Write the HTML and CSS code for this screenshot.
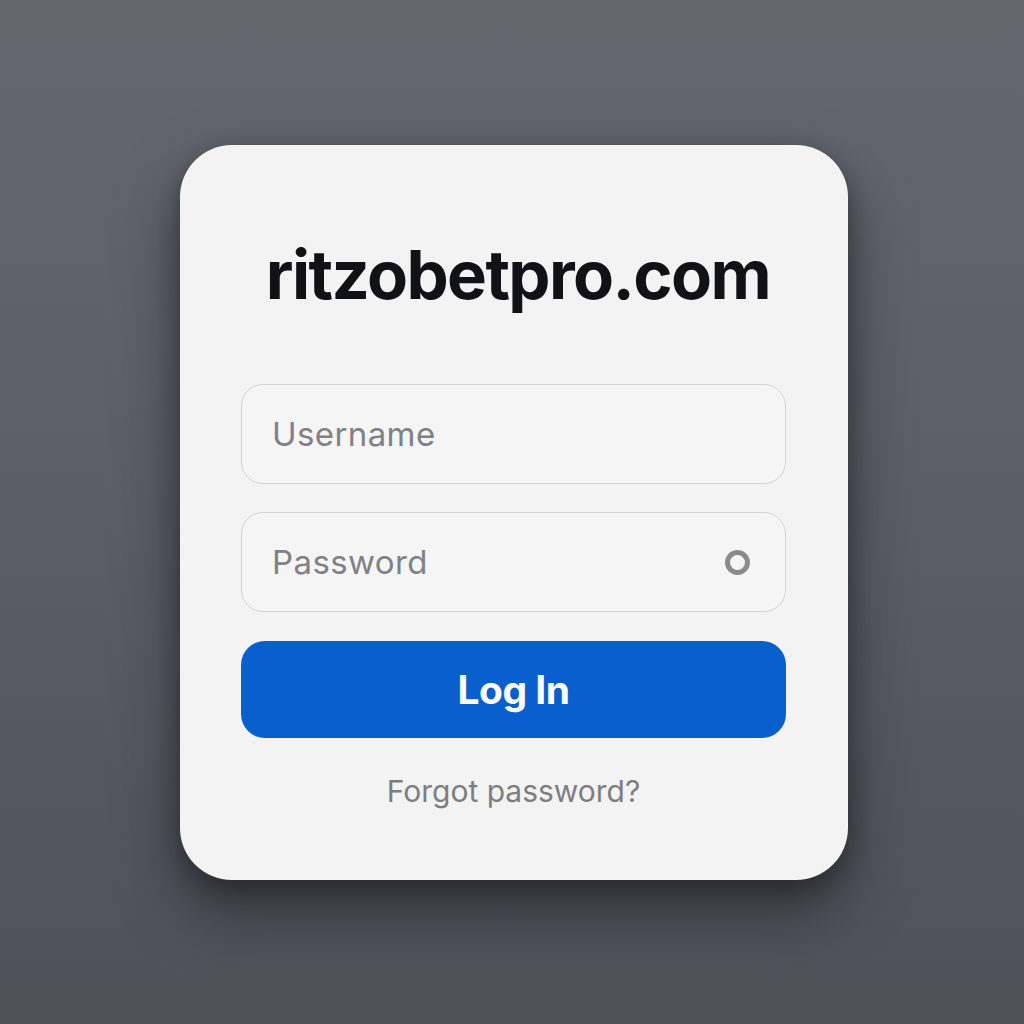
FILE: index.html
```html
<!DOCTYPE html>
<html lang="en">
<head>
    <meta charset="UTF-8">
    <meta name="viewport" content="width=device-width, initial-scale=1.0">
    <title>ritzobetpro.com - Log In</title>
    <link rel="stylesheet" href="styles.css">
</head>
<body>
    <div class="login-card">
        <h1 class="brand">ritzobetpro.com</h1>
        <form class="login-form">
            <div class="field">
                <input type="text" placeholder="Username">
            </div>
            <div class="field">
                <input type="password" placeholder="Password">
                <span class="eye"></span>
            </div>
            <button type="button" class="login-btn">Log In</button>
        </form>
        <a class="forgot" href="#">Forgot password?</a>
    </div>
</body>
</html>
```

FILE: styles.css
```css
/* Page */
body {
    margin: 0;
    height: 100vh;
    display: flex;
    justify-content: center;
    align-items: flex-start;
    background: linear-gradient(180deg, #63686f 0%, #5a5e66 50%, #4d5158 100%);
    font-family: 'Inter', 'Liberation Sans', sans-serif;
}
.login-card {
    margin-top: 145px;
    margin-left: 4px;
    width: 668px;
    height: 735px;
    box-sizing: border-box;
    padding: 93px 62px 0 61px;
    background: #f3f3f3;
    border-radius: 52px;
    box-shadow: 0 30px 60px rgba(20, 22, 26, 0.55), 0 8px 20px rgba(20, 22, 26, 0.35);
    display: flex;
    flex-direction: column;
    align-items: stretch;
}
.brand {
    margin: 0 0 72px;
    padding-left: 9px;
    text-align: center;
    font-size: 67px;
    line-height: 74px;
    font-weight: 700;
    letter-spacing: -1.6px;
    color: #111216;
}
.login-form {
    display: flex;
    flex-direction: column;
    gap: 28px;
}
.field {
    position: relative;
}
.field input {
    width: 100%;
    height: 100px;
    box-sizing: border-box;
    padding: 0 30px;
    border: 1.5px solid #d2d3d5;
    border-radius: 22px;
    background: #f5f5f5;
    font-family: inherit;
    font-size: 33px;
    letter-spacing: 0.4px;
    color: #333;
}
.field input::placeholder {
    color: #7f8186;
}
.eye {
    position: absolute;
    right: 36px;
    top: 38px;
    width: 15px;
    height: 15px;
    border: 5px solid #8a8b8d;
    border-radius: 50%;
}
.login-btn {
    height: 97px;
    margin-top: 1px;
    border: none;
    border-radius: 24px;
    background: #0a5fcf;
    color: #fff;
    font-family: inherit;
    font-size: 39px;
    font-weight: 700;
    letter-spacing: -0.5px;
    cursor: pointer;
}
.forgot {
    margin-top: 35px;
    text-align: center;
    font-size: 30px;
    color: #7d7e81;
    text-decoration: none;
}
```
